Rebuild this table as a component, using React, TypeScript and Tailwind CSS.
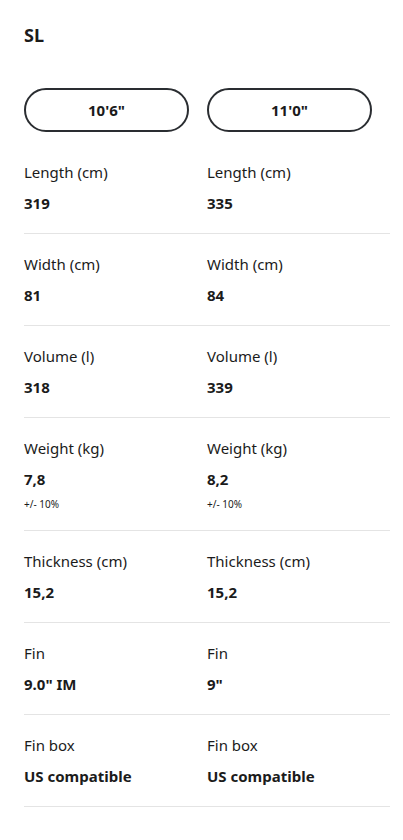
const sizes = ["10'6\"", "11'0\""];

interface Spec {
  label: string;
  values: [string, string];
  note?: string;
}

const specs: Spec[] = [
  { label: "Length (cm)", values: ["319", "335"] },
  { label: "Width (cm)", values: ["81", "84"] },
  { label: "Volume (l)", values: ["318", "339"] },
  { label: "Weight (kg)", values: ["7,8", "8,2"], note: "+/- 10%" },
  { label: "Thickness (cm)", values: ["15,2", "15,2"] },
  { label: "Fin", values: ["9.0\" IM", "9\""] },
  { label: "Fin box", values: ["US compatible", "US compatible"] },
];

export default function App() {
  return (
    <div className="min-h-[840px] bg-white px-6 pt-6 text-[#1b1b1b] font-['Noto_Sans',sans-serif]">
      <h2 className="text-[18px] font-bold leading-[22px]">SL</h2>

      <div className="mt-[42px] grid grid-cols-2 w-[366px]">
        {sizes.map((s) => (
          <button
            key={s}
            className="w-[165px] h-[44px] rounded-full border-2 border-[#2a2d31] text-[15px] font-bold"
          >
            {s}
          </button>
        ))}
      </div>

      <div className="mt-[10px] w-[366px]">
        {specs.map((spec) => (
          <div key={spec.label} className="grid grid-cols-2 pt-[19px] pb-[19px] border-b border-[#e4e4e4]">
            {spec.values.map((v, i) => (
              <div key={i} className="flex flex-col">
                <span className="text-[15px] leading-[22px]">{spec.label}</span>
                <span className="mt-[9px] text-[15px] leading-[22px] font-bold">{v}</span>
                {spec.note && (
                  <span className="mt-[7px] text-[10px] leading-[14px]">{spec.note}</span>
                )}
              </div>
            ))}
          </div>
        ))}
      </div>
    </div>
  );
}
